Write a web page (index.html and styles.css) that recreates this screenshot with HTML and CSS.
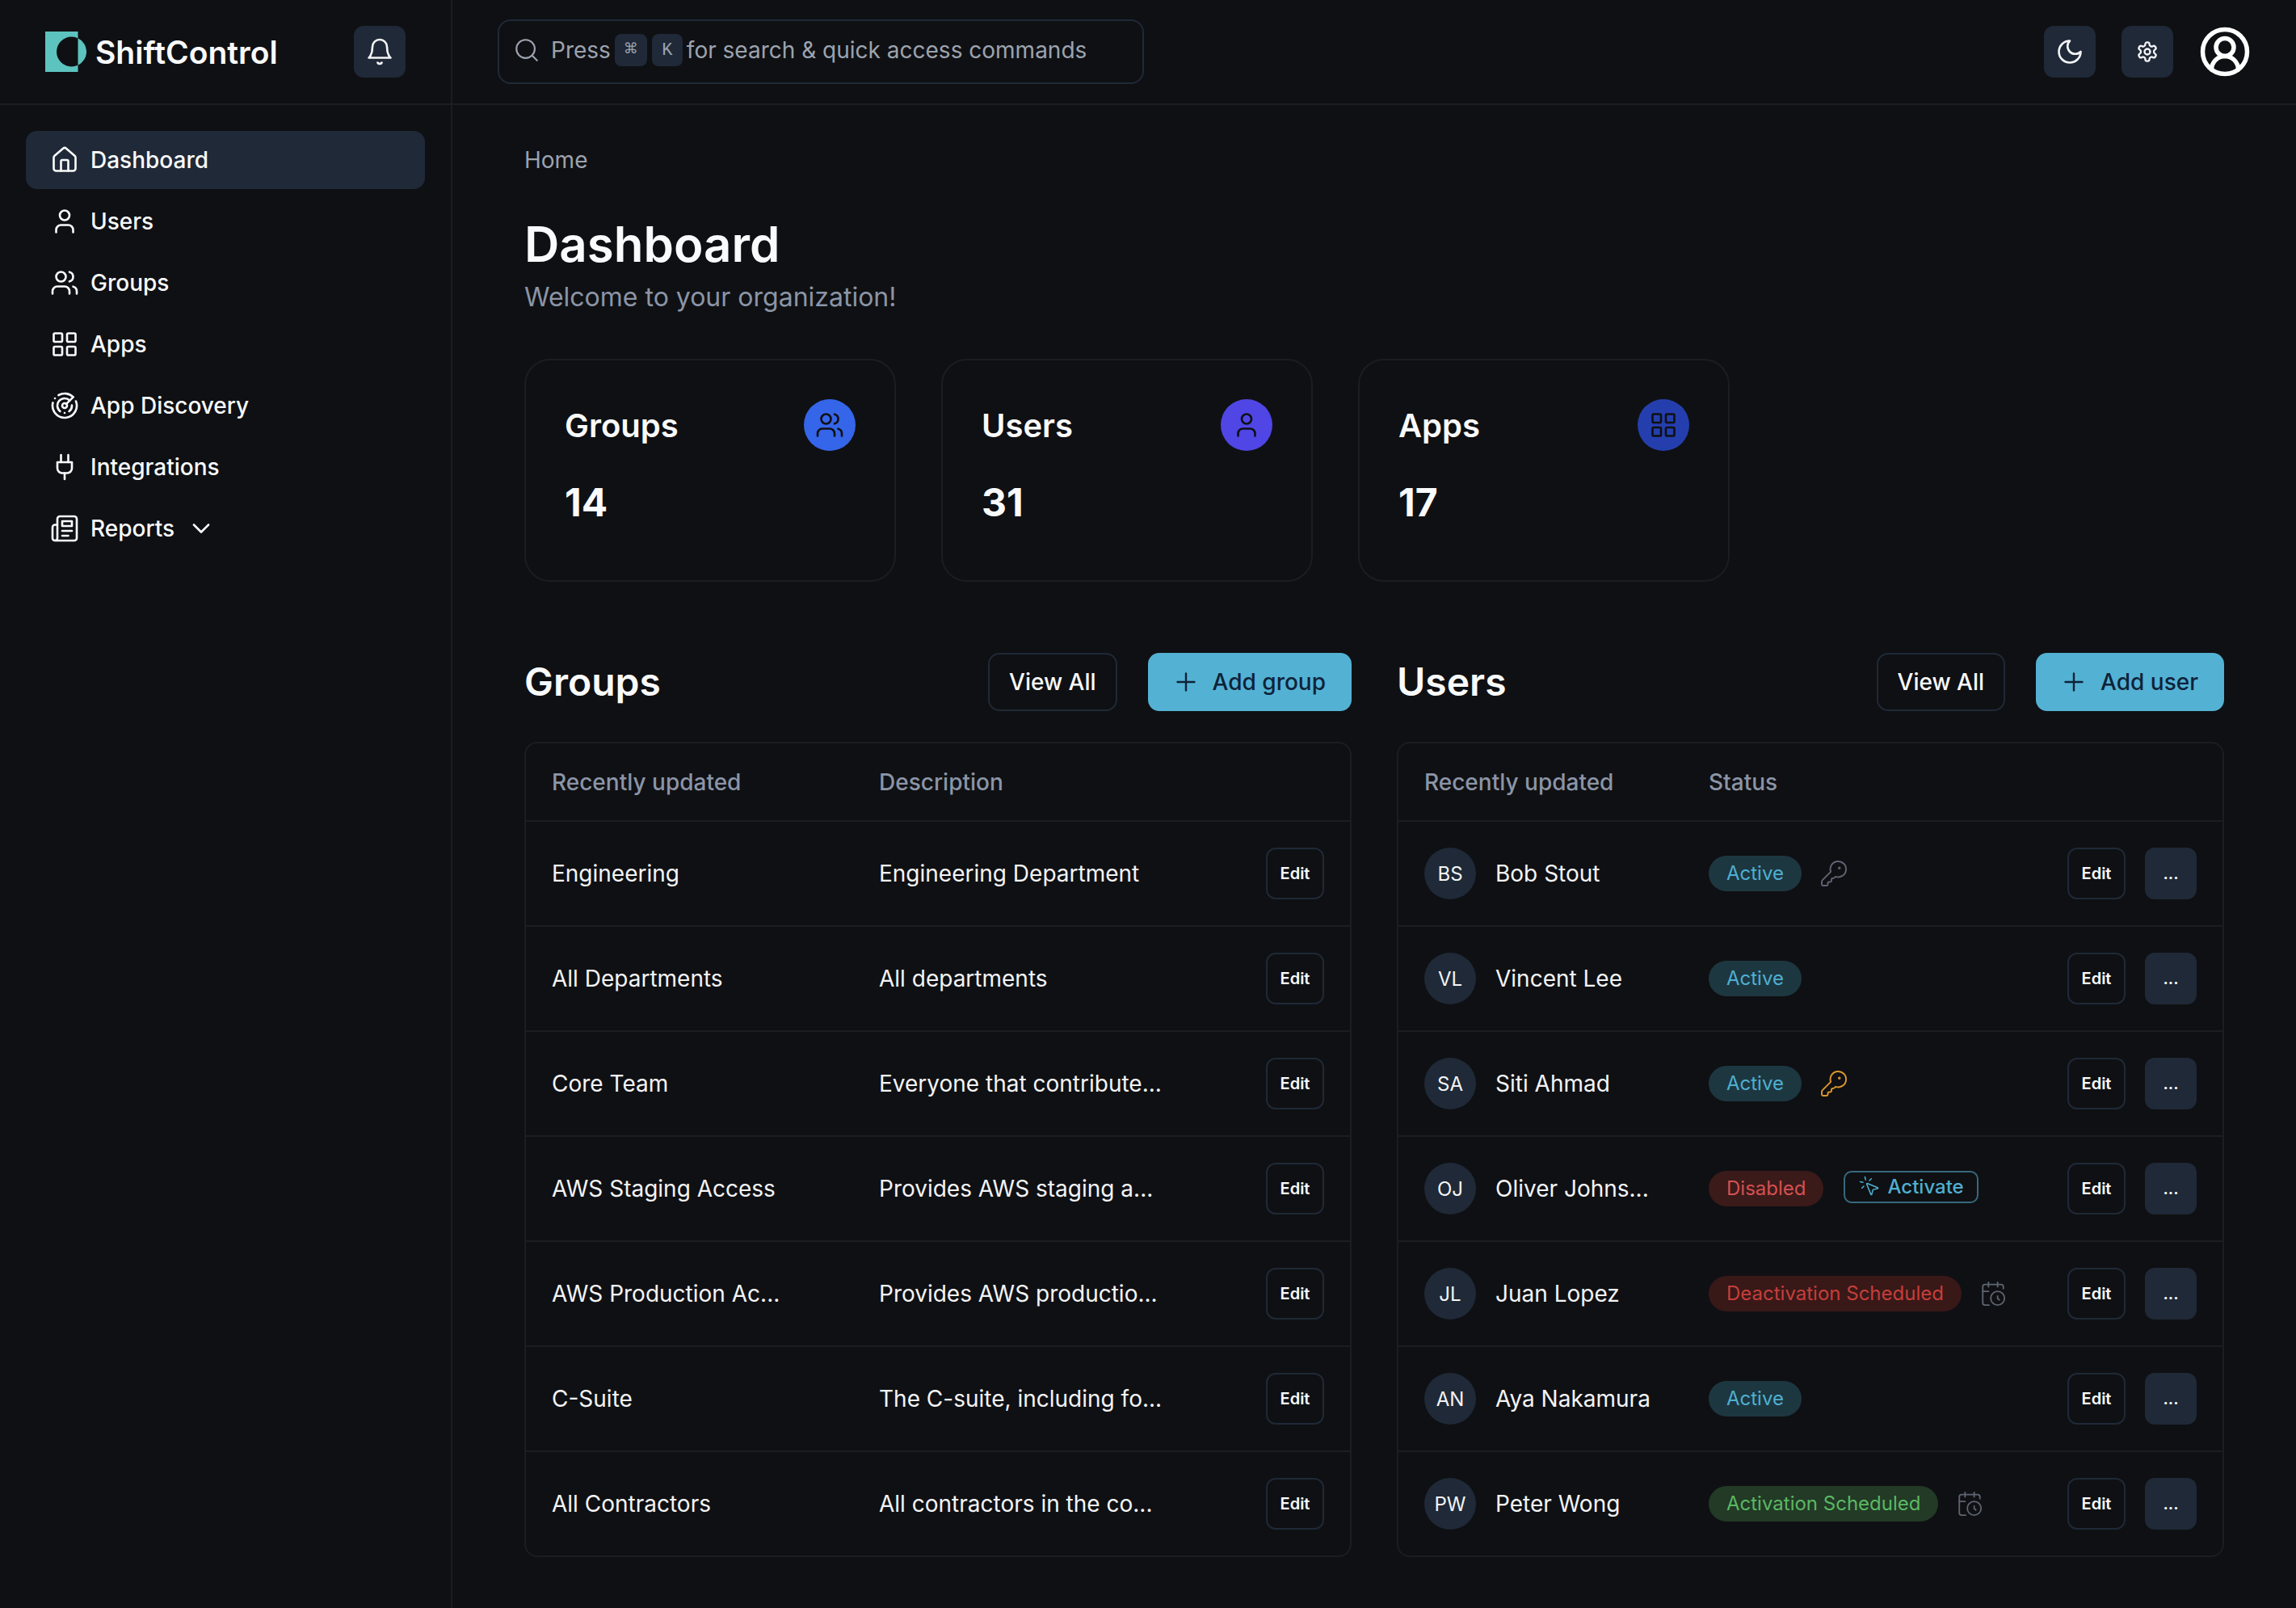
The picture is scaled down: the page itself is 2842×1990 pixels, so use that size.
FILE: index.html
```html
<!DOCTYPE html>
<html lang="en">
<head>
<meta charset="utf-8">
<title>ShiftControl</title>
<link rel="stylesheet" href="styles.css">
</head>
<body>
<svg class="sprite" xmlns="http://www.w3.org/2000/svg">
  <symbol id="i-home" viewBox="0 0 24 24"><path d="M3 10a2 2 0 0 1 .709-1.528l7-5.999a2 2 0 0 1 2.582 0l7 5.999A2 2 0 0 1 21 10v9a2 2 0 0 1-2 2H5a2 2 0 0 1-2-2z"/><path d="M15 21v-8a1 1 0 0 0-1-1h-4a1 1 0 0 0-1 1v8"/></symbol>
  <symbol id="i-user" viewBox="0 0 24 24"><path d="M19 21v-2a4 4 0 0 0-4-4H9a4 4 0 0 0-4 4v2"/><circle cx="12" cy="7" r="4"/></symbol>
  <symbol id="i-users" viewBox="0 0 24 24"><path d="M16 21v-2a4 4 0 0 0-4-4H6a4 4 0 0 0-4 4v2"/><circle cx="9" cy="7" r="4"/><path d="M22 21v-2a4 4 0 0 0-3-3.87"/><path d="M16 3.13a4 4 0 0 1 0 7.75"/></symbol>
  <symbol id="i-grid" viewBox="0 0 24 24"><rect x="3" y="3" width="7" height="7" rx="1"/><rect x="14" y="3" width="7" height="7" rx="1"/><rect x="14" y="14" width="7" height="7" rx="1"/><rect x="3" y="14" width="7" height="7" rx="1"/></symbol>
  <symbol id="i-radar" viewBox="0 0 24 24"><path d="M19.07 4.93A10 10 0 0 0 6.99 3.34"/><path d="M4 6h.01"/><path d="M2.29 9.62A10 10 0 1 0 21.31 8.35"/><path d="M16.24 7.76A6 6 0 1 0 8.23 16.67"/><path d="M12 18h.01"/><path d="M17.99 11.66A6 6 0 0 1 15.77 16.67"/><circle cx="12" cy="12" r="2"/><path d="m13.41 10.59 5.66-5.66"/></symbol>
  <symbol id="i-plug" viewBox="0 0 24 24"><path d="M12 22v-5"/><path d="M9 8V2"/><path d="M15 8V2"/><path d="M18 8v5a4 4 0 0 1-4 4h-4a4 4 0 0 1-4-4V8Z"/></symbol>
  <symbol id="i-news" viewBox="0 0 24 24"><path d="M4 22h16a2 2 0 0 0 2-2V4a2 2 0 0 0-2-2H8a2 2 0 0 0-2 2v16a2 2 0 0 1-2 2Zm0 0a2 2 0 0 1-2-2v-9c0-1.1.9-2 2-2h2"/><path d="M18 14h-8"/><path d="M15 18h-5"/><path d="M10 6h8v4h-8V6Z"/></symbol>
  <symbol id="i-chev" viewBox="0 0 24 24"><path d="m6 9 6 6 6-6"/></symbol>
  <symbol id="i-bell" viewBox="0 0 24 24"><path d="M6 8a6 6 0 0 1 12 0c0 7 3 9 3 9H3s3-2 3-9"/><path d="M10.3 21a1.94 1.94 0 0 0 3.4 0"/></symbol>
  <symbol id="i-search" viewBox="0 0 24 24"><circle cx="11" cy="11" r="8"/><path d="m21 21-4.3-4.3"/></symbol>
  <symbol id="i-moon" viewBox="0 0 24 24"><path d="M12 3a6 6 0 0 0 9 9 9 9 0 1 1-9-9Z"/></symbol>
  <symbol id="i-cog" viewBox="0 0 24 24"><path d="M12.22 2h-.44a2 2 0 0 0-2 2v.18a2 2 0 0 1-1 1.73l-.43.25a2 2 0 0 1-2 0l-.15-.08a2 2 0 0 0-2.73.73l-.22.38a2 2 0 0 0 .73 2.73l.15.1a2 2 0 0 1 1 1.72v.51a2 2 0 0 1-1 1.74l-.15.09a2 2 0 0 0-.73 2.73l.22.38a2 2 0 0 0 2.73.73l.15-.08a2 2 0 0 1 2 0l.43.25a2 2 0 0 1 1 1.73V20a2 2 0 0 0 2 2h.44a2 2 0 0 0 2-2v-.18a2 2 0 0 1 1-1.73l.43-.25a2 2 0 0 1 2 0l.15.08a2 2 0 0 0 2.73-.73l.22-.39a2 2 0 0 0-.73-2.73l-.15-.08a2 2 0 0 1-1-1.74v-.5a2 2 0 0 1 1-1.74l.15-.09a2 2 0 0 0 .73-2.73l-.22-.38a2 2 0 0 0-2.73-.73l-.15.08a2 2 0 0 1-2 0l-.43-.25a2 2 0 0 1-1-1.73V4a2 2 0 0 0-2-2z"/><circle cx="12" cy="12" r="3"/></symbol>
  <symbol id="i-profile" viewBox="0 0 24 24"><path d="M18 20a6 6 0 0 0-12 0"/><circle cx="12" cy="10" r="4"/><circle cx="12" cy="12" r="10"/></symbol>
  <symbol id="i-plus" viewBox="0 0 24 24"><path d="M5 12h14"/><path d="M12 5v14"/></symbol>
  <symbol id="i-key" viewBox="0 0 24 24"><path d="M2.586 17.414A2 2 0 0 0 2 18.828V21a1 1 0 0 0 1 1h3a1 1 0 0 0 1-1v-1a1 1 0 0 1 1-1h1a1 1 0 0 0 1-1v-1a1 1 0 0 1 1-1h.172a2 2 0 0 0 1.414-.586l.814-.814a6.5 6.5 0 1 0-4-4z"/><circle cx="16.5" cy="7.5" r=".5"/></symbol>
  <symbol id="i-click" viewBox="0 0 24 24"><path d="M14 4.1 12 6"/><path d="m5.1 8-2.9-.8"/><path d="m6 12-1.9 2"/><path d="M7.2 2.2 8 5.1"/><path d="M9.037 9.69a.498.498 0 0 1 .653-.653l11 4.5a.5.5 0 0 1-.074.949l-4.349 1.041a1 1 0 0 0-.74.739l-1.04 4.35a.5.5 0 0 1-.95.074z"/></symbol>
  <symbol id="i-cal" viewBox="0 0 24 24"><path d="M21 7.5V6a2 2 0 0 0-2-2H5a2 2 0 0 0-2 2v14a2 2 0 0 0 2 2h3.5"/><path d="M16 2v4"/><path d="M8 2v4"/><path d="M3 10h5"/><path d="M17.5 17.5 16 16.3V14"/><circle cx="16" cy="16" r="6"/></symbol>
</svg>

<div class="app">
  <header class="topbar">
    <div class="brandbar">
      <div class="brand">
        <svg class="logo" viewBox="0 0 51 50" xmlns="http://www.w3.org/2000/svg"><rect x="0" y="0" width="40.5" height="50" fill="#5dc3bf"/><circle cx="32.5" cy="25" r="18.5" fill="#0f1013"/><path d="M40.5 8.3a18.5 18.5 0 0 1 0 33.4z" fill="#5dc3bf"/></svg>
        <span class="brand-name">ShiftControl</span>
      </div>
      <button class="icon-btn"><svg class="ic ic-36"><use href="#i-bell"/></svg></button>
    </div>
    <div class="topmain">
      <div class="search">
        <svg class="ic ic-search"><use href="#i-search"/></svg>
        <span>Press</span>
        <kbd class="kbd kbd-cmd">⌘</kbd>
        <kbd class="kbd">K</kbd>
        <span class="search-rest">for search &amp; quick access commands</span>
      </div>
      <div class="top-actions">
        <button class="icon-btn"><svg class="ic ic-36"><use href="#i-moon"/></svg></button>
        <button class="icon-btn"><svg class="ic ic-28"><use href="#i-cog"/></svg></button>
        <svg class="ic profile"><use href="#i-profile"/></svg>
      </div>
    </div>
  </header>

  <div class="body">
    <aside class="sidebar">
      <nav class="nav">
        <a class="nav-item active"><svg class="ic ic-36"><use href="#i-home"/></svg><span>Dashboard</span></a>
        <a class="nav-item"><svg class="ic ic-36"><use href="#i-user"/></svg><span>Users</span></a>
        <a class="nav-item"><svg class="ic ic-36"><use href="#i-users"/></svg><span>Groups</span></a>
        <a class="nav-item"><svg class="ic ic-36"><use href="#i-grid"/></svg><span>Apps</span></a>
        <a class="nav-item"><svg class="ic ic-36"><use href="#i-radar"/></svg><span>App Discovery</span></a>
        <a class="nav-item"><svg class="ic ic-36"><use href="#i-plug"/></svg><span>Integrations</span></a>
        <a class="nav-item"><svg class="ic ic-36"><use href="#i-news"/></svg><span>Reports</span><svg class="ic ic-chev"><use href="#i-chev"/></svg></a>
      </nav>
    </aside>

    <main class="main">
      <div class="crumb">Home</div>
      <h1 class="title">Dashboard</h1>
      <p class="subtitle">Welcome to your organization!</p>

      <section class="cards">
        <div class="card">
          <div class="card-head"><h3>Groups</h3><span class="circle c-blue"><svg class="ic ic-36"><use href="#i-users"/></svg></span></div>
          <div class="card-num">14</div>
        </div>
        <div class="card">
          <div class="card-head"><h3>Users</h3><span class="circle c-indigo"><svg class="ic ic-36"><use href="#i-user"/></svg></span></div>
          <div class="card-num">31</div>
        </div>
        <div class="card">
          <div class="card-head"><h3>Apps</h3><span class="circle c-navy"><svg class="ic ic-36"><use href="#i-grid"/></svg></span></div>
          <div class="card-num">17</div>
        </div>
      </section>

      <section class="columns">
        <div class="column">
          <div class="section-head">
            <h2>Groups</h2>
            <button class="btn btn-outline">View All</button>
            <button class="btn btn-primary"><svg class="ic ic-36"><use href="#i-plus"/></svg>Add group</button>
          </div>
          <div class="table">
            <div class="row row-head groups-row"><span>Recently updated</span><span>Description</span></div>
            <div class="row groups-row"><span>Engineering</span><span>Engineering Department</span><button class="sm-btn">Edit</button></div>
            <div class="row groups-row"><span>All Departments</span><span>All departments</span><button class="sm-btn">Edit</button></div>
            <div class="row groups-row"><span>Core Team</span><span>Everyone that contribute...</span><button class="sm-btn">Edit</button></div>
            <div class="row groups-row"><span>AWS Staging Access</span><span>Provides AWS staging a...</span><button class="sm-btn">Edit</button></div>
            <div class="row groups-row"><span>AWS Production Ac...</span><span>Provides AWS productio...</span><button class="sm-btn">Edit</button></div>
            <div class="row groups-row"><span>C-Suite</span><span>The C-suite, including fo...</span><button class="sm-btn">Edit</button></div>
            <div class="row groups-row"><span>All Contractors</span><span>All contractors in the co...</span><button class="sm-btn">Edit</button></div>
          </div>
        </div>

        <div class="column">
          <div class="section-head">
            <h2>Users</h2>
            <button class="btn btn-outline">View All</button>
            <button class="btn btn-primary"><svg class="ic ic-36"><use href="#i-plus"/></svg>Add user</button>
          </div>
          <div class="table">
            <div class="row row-head users-row"><span>Recently updated</span><span>Status</span></div>
            <div class="row users-row">
              <div class="person"><span class="avatar">BS</span><span>Bob Stout</span></div>
              <div class="status"><span class="badge b-active">Active</span><svg class="ic ic-key k-gray"><use href="#i-key"/></svg></div>
              <div class="actions"><button class="sm-btn">Edit</button><button class="more-btn">...</button></div>
            </div>
            <div class="row users-row">
              <div class="person"><span class="avatar">VL</span><span>Vincent Lee</span></div>
              <div class="status"><span class="badge b-active">Active</span></div>
              <div class="actions"><button class="sm-btn">Edit</button><button class="more-btn">...</button></div>
            </div>
            <div class="row users-row">
              <div class="person"><span class="avatar">SA</span><span>Siti Ahmad</span></div>
              <div class="status"><span class="badge b-active">Active</span><svg class="ic ic-key k-orange"><use href="#i-key"/></svg></div>
              <div class="actions"><button class="sm-btn">Edit</button><button class="more-btn">...</button></div>
            </div>
            <div class="row users-row">
              <div class="person"><span class="avatar">OJ</span><span>Oliver Johns...</span></div>
              <div class="status"><span class="badge b-disabled">Disabled</span><button class="activate"><svg class="ic ic-click"><use href="#i-click"/></svg>Activate</button></div>
              <div class="actions"><button class="sm-btn">Edit</button><button class="more-btn">...</button></div>
            </div>
            <div class="row users-row">
              <div class="person"><span class="avatar">JL</span><span>Juan Lopez</span></div>
              <div class="status"><span class="badge b-deact">Deactivation Scheduled</span><svg class="ic ic-cal"><use href="#i-cal"/></svg></div>
              <div class="actions"><button class="sm-btn">Edit</button><button class="more-btn">...</button></div>
            </div>
            <div class="row users-row">
              <div class="person"><span class="avatar">AN</span><span>Aya Nakamura</span></div>
              <div class="status"><span class="badge b-active">Active</span></div>
              <div class="actions"><button class="sm-btn">Edit</button><button class="more-btn">...</button></div>
            </div>
            <div class="row users-row">
              <div class="person"><span class="avatar">PW</span><span>Peter Wong</span></div>
              <div class="status"><span class="badge b-sched">Activation Scheduled</span><svg class="ic ic-cal"><use href="#i-cal"/></svg></div>
              <div class="actions"><button class="sm-btn">Edit</button><button class="more-btn">...</button></div>
            </div>
          </div>
        </div>
      </section>
    </main>
  </div>
</div>
</body>
</html>
```
FILE: styles.css
```css
* { box-sizing: border-box; }
html, body { margin: 0; padding: 0; }
body {
  width: 2842px;
  height: 1990px;
  overflow: hidden;
  background: #0f1013;
  color: #f9fafb;
  font-family: "Inter", "Liberation Sans", sans-serif;
  font-size: 28px;
}
.sprite { display: none; }
h1, h2, h3, p { margin: 0; }
button { font-family: inherit; cursor: pointer; }

.ic { fill: none; stroke: currentColor; stroke-width: 1.75; stroke-linecap: round; stroke-linejoin: round; flex: none; display: block; }
.ic-36 { width: 36px; height: 36px; }
.ic-28 { width: 28px; height: 28px; stroke-width: 2; }

.app { display: flex; flex-direction: column; height: 100%; }

/* top bar */
.topbar { display: flex; height: 130px; border-bottom: 2px solid #1b1d22; flex: none; }
.brandbar {
  width: 560px; flex: none;
  display: flex; align-items: center; justify-content: space-between;
  padding: 0 56px;
  border-right: 2px solid #1b1d22;
}
.brand { display: flex; align-items: center; gap: 11px; }
.logo { width: 51px; height: 50px; display: block; }
.brand-name { font-size: 39px; font-weight: 600; color: #f9fafb; }
.icon-btn {
  width: 64px; height: 64px; border: 0; border-radius: 12px;
  background: #1f2937; color: #f3f4f6;
  display: flex; align-items: center; justify-content: center; padding: 0;
}
.topmain { flex: 1; display: flex; align-items: center; justify-content: space-between; padding: 0 55px 0 56px; }
.search {
  width: 800px; height: 80px;
  border: 2px solid #1f2937; border-radius: 16px;
  display: flex; align-items: center;
  padding: 0 0 4px 17px;
  color: #9ca3af; font-size: 28px;
}
.ic-search { width: 34px; height: 34px; margin-right: 13px; stroke-width: 1.5; }
.kbd {
  width: 38px; height: 40px; border-radius: 8px; background: #1f2937;
  font-family: "Liberation Mono", monospace; font-size: 22px; color: #9ca3af;
  display: inline-flex; align-items: center; justify-content: center;
  margin-left: 6px;
}
.kbd-cmd { width: 40px; margin-left: 5px; padding-bottom: 6px; font-family: "DejaVu Sans", sans-serif; font-size: 18px; }
.search-rest { margin-left: 5px; }
.top-actions { display: flex; align-items: center; gap: 32px; }
.profile { width: 66px; height: 66px; margin-left: -1px; color: #fff; stroke-width: 2; }

/* body */
.body { flex: 1; display: flex; min-height: 0; }
.sidebar { width: 560px; flex: none; border-right: 2px solid #1b1d22; padding: 32px 32px 0; }
.nav { display: flex; flex-direction: column; gap: 4px; }
.nav-item {
  height: 72px; width: 494px; border-radius: 14px;
  display: flex; align-items: center; gap: 14px;
  padding-left: 30px;
  font-size: 28px; font-weight: 500; color: #f9fafb;
}
.nav-item.active { background: #1f2937; }
.ic-chev { width: 36px; height: 36px; margin-left: 1px; }

.main { flex: 1; padding: 32px 89px 0 89px; min-width: 0; }
.crumb { height: 72px; line-height: 72px; font-size: 28px; color: #9ca3af; }
.title { margin-top: 32px; font-size: 60px; line-height: 72px; font-weight: 600; color: #f9fafb; }
.subtitle { margin-top: 5px; font-size: 32px; line-height: 50px; color: #8b95a7; }

.cards { display: flex; gap: 56px; margin-top: 51px; }
.card {
  width: 460px; height: 276px; border: 2px solid #1b1d22; border-radius: 32px;
  padding: 48px;
}
.card-head { display: flex; align-items: center; justify-content: space-between; height: 64px; }
.card-head h3 { font-size: 40px; font-weight: 600; color: #f9fafb; }
.circle { width: 64px; height: 64px; border-radius: 50%; display: flex; align-items: center; justify-content: center; color: #0f1013; }
.c-blue { background: #3565e8; }
.c-indigo { background: #4f46e5; }
.c-navy { background: #243fad; }
.card-num { margin-top: 34px; font-size: 48px; line-height: 60px; font-weight: 700; color: #f9fafb; }

.columns { display: grid; grid-template-columns: 1024px 1024px; gap: 56px; margin-top: 88px; }
.section-head { display: flex; align-items: center; gap: 38px; height: 72px; }
.section-head h2 { flex: 1; padding-bottom: 2px; font-size: 48px; font-weight: 600; color: #f9fafb; }
.btn { height: 72px; border-radius: 14px; font-size: 28px; font-weight: 500; display: flex; align-items: center; padding: 0 24px; }
.btn-outline { background: transparent; border: 2px solid #1f2937; color: #f9fafb; }
.btn-primary { background: #53b2d3; border: 0; color: #0f2239; gap: 15px; padding: 0 32px 0 29px; }
.btn-primary .ic { width: 36px; height: 36px; stroke-width: 1.6; }

.table { margin-top: 38px; border: 2px solid #1b1d22; border-radius: 16px; }
.row { display: grid; align-items: center; height: 130px; padding: 0 32px; border-top: 2px solid #1b1d22; font-size: 28px; color: #f3f4f6; }
.row-head { height: 95px; border-top: 0; color: #8b95a7; font-weight: 500; }
.groups-row { grid-template-columns: 405px 1fr auto; }
.users-row { grid-template-columns: 352px 1fr auto; }
.sm-btn {
  width: 72px; height: 64px; border: 2px solid #1f2937; border-radius: 12px;
  background: transparent; color: #f9fafb; font-size: 20px; font-weight: 600; padding: 0;
}
.more-btn {
  width: 64px; height: 64px; border: 0; border-radius: 12px; background: #1f2937;
  color: #f9fafb; font-size: 20px; font-weight: 600; padding: 0;
}
.actions { display: flex; gap: 24px; }
.person { display: flex; align-items: center; gap: 24px; }
.avatar {
  width: 64px; height: 64px; border-radius: 50%; background: #1f2937;
  display: flex; align-items: center; justify-content: center;
  font-size: 24px; font-weight: 400; color: #f3f4f6;
}
.status { display: flex; align-items: center; gap: 22px; }
.badge { height: 44px; border-radius: 22px; padding: 0 22px 2px; display: flex; align-items: center; font-size: 24px; }
.b-active { background: #1d3741; color: #4fafd0; }
.b-disabled { background: #3b1a1a; color: #d35150; }
.b-deact { background: #391818; color: #c53f3a; }
.b-sched { background: #223a26; color: #5bb863; }
.ic-key { width: 36px; height: 36px; stroke-width: 1.3; }
.k-gray { color: #5e6472; }
.k-orange { color: #dc962e; }
.ic-cal { width: 34px; height: 36px; stroke-width: 1.3; color: #5e6472; }
.activate {
  height: 40px; border: 2px solid #37697d; border-radius: 10px; background: transparent;
  color: #4fafd0; font-size: 24px; font-weight: 500; display: flex; align-items: center; gap: 8px;
  padding: 0 16px 2px; margin: 0 0 4px 3px;
}
.ic-click { width: 28px; height: 28px; stroke-width: 1.3; }
```
